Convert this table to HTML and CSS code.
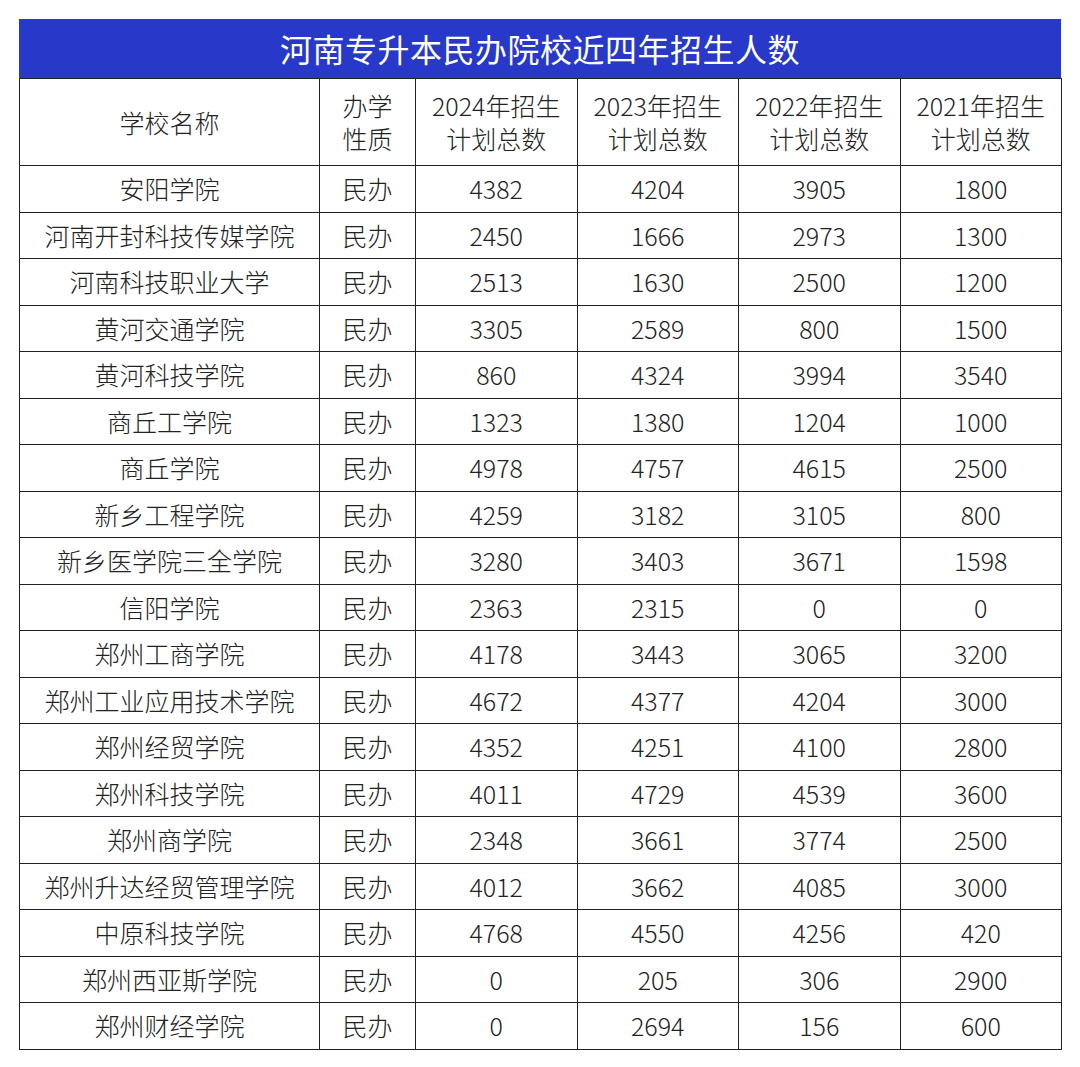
FILE: index.html
```html
<!DOCTYPE html>
<html lang="zh-CN">
<head>
<meta charset="utf-8">
<title>河南专升本民办院校近四年招生人数</title>
<link rel="stylesheet" href="styles.css">
</head>
<body>
<div class="wrap">
  <div class="title">河南专升本民办院校近四年招生人数</div>
  <table class="data">
    <colgroup>
      <col class="c-name"><col class="c-type"><col class="c-num"><col class="c-num"><col class="c-num"><col class="c-num">
    </colgroup>
    <thead>
      <tr>
        <th>学校名称</th>
        <th><span class="hl">办学</span><span class="hl">性质</span></th>
        <th><span class="hl">2024年招生</span><span class="hl">计划总数</span></th>
        <th><span class="hl">2023年招生</span><span class="hl">计划总数</span></th>
        <th><span class="hl">2022年招生</span><span class="hl">计划总数</span></th>
        <th><span class="hl">2021年招生</span><span class="hl">计划总数</span></th>
      </tr>
    </thead>
    <tbody>
      <tr><td>安阳学院</td><td>民办</td><td>4382</td><td>4204</td><td>3905</td><td>1800</td></tr>
      <tr><td>河南开封科技传媒学院</td><td>民办</td><td>2450</td><td>1666</td><td>2973</td><td>1300</td></tr>
      <tr><td>河南科技职业大学</td><td>民办</td><td>2513</td><td>1630</td><td>2500</td><td>1200</td></tr>
      <tr><td>黄河交通学院</td><td>民办</td><td>3305</td><td>2589</td><td>800</td><td>1500</td></tr>
      <tr><td>黄河科技学院</td><td>民办</td><td>860</td><td>4324</td><td>3994</td><td>3540</td></tr>
      <tr><td>商丘工学院</td><td>民办</td><td>1323</td><td>1380</td><td>1204</td><td>1000</td></tr>
      <tr><td>商丘学院</td><td>民办</td><td>4978</td><td>4757</td><td>4615</td><td>2500</td></tr>
      <tr><td>新乡工程学院</td><td>民办</td><td>4259</td><td>3182</td><td>3105</td><td>800</td></tr>
      <tr><td>新乡医学院三全学院</td><td>民办</td><td>3280</td><td>3403</td><td>3671</td><td>1598</td></tr>
      <tr><td>信阳学院</td><td>民办</td><td>2363</td><td>2315</td><td>0</td><td>0</td></tr>
      <tr><td>郑州工商学院</td><td>民办</td><td>4178</td><td>3443</td><td>3065</td><td>3200</td></tr>
      <tr><td>郑州工业应用技术学院</td><td>民办</td><td>4672</td><td>4377</td><td>4204</td><td>3000</td></tr>
      <tr><td>郑州经贸学院</td><td>民办</td><td>4352</td><td>4251</td><td>4100</td><td>2800</td></tr>
      <tr><td>郑州科技学院</td><td>民办</td><td>4011</td><td>4729</td><td>4539</td><td>3600</td></tr>
      <tr><td>郑州商学院</td><td>民办</td><td>2348</td><td>3661</td><td>3774</td><td>2500</td></tr>
      <tr><td>郑州升达经贸管理学院</td><td>民办</td><td>4012</td><td>3662</td><td>4085</td><td>3000</td></tr>
      <tr><td>中原科技学院</td><td>民办</td><td>4768</td><td>4550</td><td>4256</td><td>420</td></tr>
      <tr><td>郑州西亚斯学院</td><td>民办</td><td>0</td><td>205</td><td>306</td><td>2900</td></tr>
      <tr><td>郑州财经学院</td><td>民办</td><td>0</td><td>2694</td><td>156</td><td>600</td></tr>
    </tbody>
  </table>
</div>
</body>
</html>
```

FILE: styles.css
```css
html, body {
  margin: 0;
  padding: 0;
  background: #ffffff;
}
body {
  font-family: "Noto Sans CJK SC", "Noto Sans", sans-serif;
  color: #222222;
}
.wrap {
  width: 1042px;
  padding: 19px 0 0 19px;
}
.title {
  height: 59px;
  background: #2838c9;
  color: #ffffff;
  font-size: 32px;
  font-weight: 400;
  line-height: 59px;
  text-align: center;
  letter-spacing: 0.5px;
}
.data {
  width: 1043px;
  border-collapse: collapse;
  table-layout: fixed;
}
.c-name { width: 300px; }
.c-type { width: 96px; }
.c-num { width: 161.5px; }
.data th, .data td {
  border: 1px solid #222222;
  padding: 0;
  text-align: center;
  font-weight: 300;
  font-size: 25px;
  color: #222222;
}
.data th {
  height: 86px;
  line-height: 33px;
}
.hl {
  display: block;
  height: 33px;
  line-height: 33px;
}
.data td {
  height: 45.5px;
  line-height: 45px;
}
```
